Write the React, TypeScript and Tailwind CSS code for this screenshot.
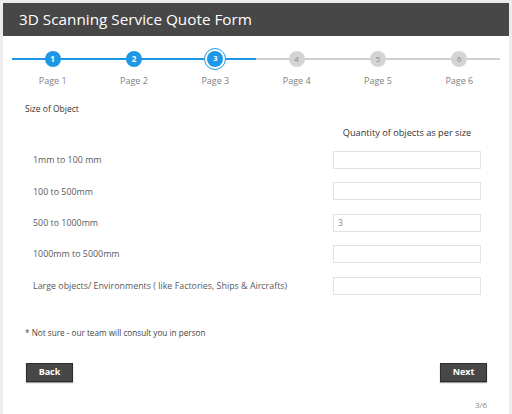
import React from 'react';

const steps = [1, 2, 3, 4, 5, 6];
const current = 3;

const rows = [
  { label: '1mm to 100 mm', value: '' },
  { label: '100 to 500mm', value: '' },
  { label: '500 to 1000mm', value: '3' },
  { label: '1000mm to 5000mm', value: '' },
  { label: 'Large objects/ Environments ( like Factories, Ships & Aircrafts)', value: '' },
];

const Stepper: React.FC = () => (
  <div className="flex px-[9px] pt-[12px]">
    {steps.map((n) => {
      const done = n <= current;
      return (
        <div key={n} className="flex-1 flex flex-col items-center">
          <div className="relative w-full h-[22px] flex items-center justify-center">
            <div
              className={`absolute left-0 right-0 top-[10px] h-[2px] ${done ? 'bg-[#1e98e6]' : 'bg-[#cfcfcf]'}`}
            />
            {n === current ? (
              <div className="relative w-[22px] h-[22px] rounded-full border border-[#1e98e6] bg-white flex items-center justify-center">
                <div className="w-[16px] h-[16px] rounded-full bg-[#1e98e6] text-white text-[7.5px] font-bold flex items-center justify-center">
                  {n}
                </div>
              </div>
            ) : (
              <div
                className={`relative w-[16px] h-[16px] rounded-full text-[8px] flex items-center justify-center ${
                  done ? 'bg-[#1e98e6] text-white font-bold' : 'bg-[#d4d4d4] text-[#8a8a8a]'
                }`}
              >
                {n}
              </div>
            )}
          </div>
          <div className="mt-[5px] text-[9px] leading-[12px] text-[#808080]">Page {n}</div>
        </div>
      );
    })}
  </div>
);

export default function App() {
  return (
    <div
      className="w-[512px] h-[414px] bg-[#ececec] pt-[3px] pl-[3px] pr-[3px] overflow-hidden"
      style={{ fontFamily: '"Open Sans", "Liberation Sans", sans-serif' }}
    >
      <div className="bg-white h-full flex flex-col">
        <div className="h-[33px] bg-[#474747] pl-[16px] flex items-center text-white text-[15.3px] leading-none">
          3D Scanning Service Quote Form
        </div>

        <Stepper />

        <div className="pl-[22px] pr-[28px]">
          <div className="mt-[16px] text-[8.5px] leading-[12px] text-[#333]">Size of Object</div>

          <div className="mt-[11px] flex justify-end">
            <div className="w-[148px] text-center text-[9.2px] leading-[14px] text-[#333]">
              Quantity of objects as per size
            </div>
          </div>

          <div className="mt-[11px] flex flex-col gap-[13.4px]">
            {rows.map((r) => (
              <div key={r.label} className="flex items-center">
                <div className="flex-1 pl-[8px] text-[8.9px] text-[#5a5a5a]">{r.label}</div>
                <input
                  readOnly
                  value={r.value}
                  className="w-[148px] h-[18px] border border-[#e3e3e3] px-[4px] text-[8.5px] text-[#888] outline-none"
                />
              </div>
            ))}
          </div>

          <div className="mt-[32px] text-[8.2px] leading-[12px] text-[#444]">
            * Not sure - our team will consult you in person
          </div>

          <div className="mt-[24px] flex justify-between pl-[1px]">
            <button className="w-[47px] h-[19px] bg-[#474747] border border-[#2e2e2e] shadow-[0_1px_1px_rgba(0,0,0,0.4)] text-white text-[9px] font-bold">
              Back
            </button>
            <button className="w-[47px] h-[19px] mr-[-6px] bg-[#474747] border border-[#2e2e2e] shadow-[0_1px_1px_rgba(0,0,0,0.4)] text-white text-[9px] font-bold">
              Next
            </button>
          </div>

          <div className="mt-[17px] flex justify-end mr-[-6px] text-[8px] text-[#888]">3/6</div>
        </div>
      </div>
    </div>
  );
}
